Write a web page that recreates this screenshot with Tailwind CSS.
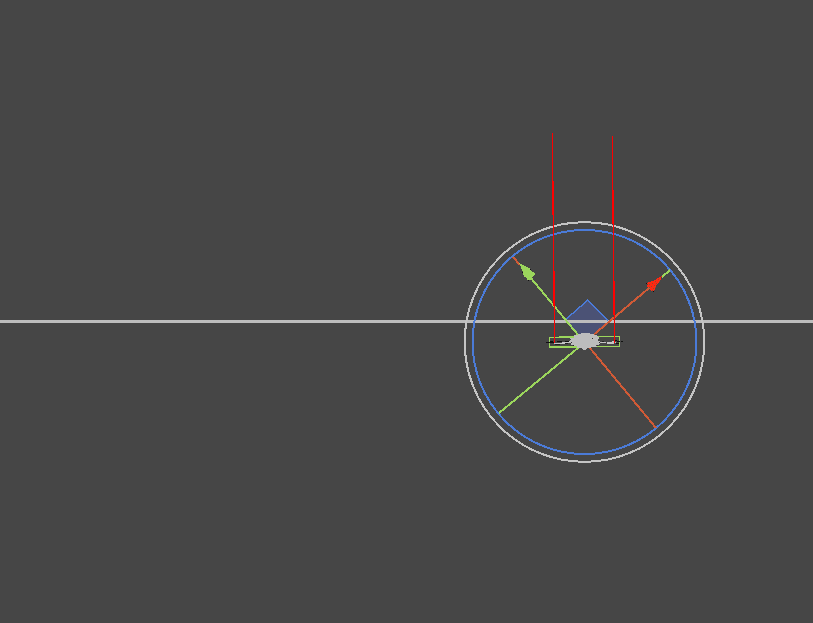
<!DOCTYPE html>
<html lang="en">
<head>
<meta charset="utf-8">
<meta name="viewport" content="width=device-width, initial-scale=1">
<title>Scene view</title>
<script src="https://cdn.jsdelivr.net/npm/@tailwindcss/browser@4"></script>
</head>
<body class="bg-[#464646]">
<main class="relative min-h-screen overflow-hidden bg-[#464646]">
<svg class="absolute inset-0 h-full w-full" shape-rendering="crispEdges" fill="none" role="img" aria-label="Scene with rotation gizmo">
  <!-- ground plane -->
  <rect x="0" y="320" width="100%" height="3" fill="#bdbdbd"/>
  <!-- plane handle -->
  <path d="M588 300L565 320L584 342L608 321Z" fill="#4b5275"/>
  <path d="M565 320.5H608M565 321.5H608M567 322.5H607" stroke="#bdbdbd"/>
  <path d="M565 320L588 300L608 321" stroke="#4b7bd8" stroke-width="1.4"/>
  <!-- collider bounds -->
  <path d="M549.5 337.5H559.5V336.5H619.5V346.5H549.5Z" stroke="#9bd65c"/>
  <path d="M559 337.5H580M549 347.5H577" stroke="#9bd65c"/>
  <!-- rotors -->
  <path d="M546 342.5H554M550 341.5H553M557 341.5H562M565 341.5H570M617 341.5H620M621 341.5H623M614 340.5H617M616 343.5H619" stroke="#111"/>
  <path d="M554 343.5H566M562 342.5H573M598 342.5H606M607 342.5H616M607 343.5H614M612 341.5H615" stroke="#c4c4c4"/>
  <path d="M555 344.5H560M573 345.5H577M602 341.5H604M565 343.5H568" stroke="#222"/>
  <!-- rotation rings -->
  <circle cx="584.5" cy="342" r="119.8" stroke="#c4c4c4" stroke-width="2"/>
  <circle cx="584.5" cy="342" r="112" stroke="#4b7bd8" stroke-width="2"/>
  <!-- axes -->
  <path d="M584 342L530 277M584 343L499 413M662 277L670 270" stroke="#9bd65c" stroke-width="2"/>
  <path d="M585 342L655 283M585 342L656 428M513 257L520 265" stroke="#d05a36" stroke-width="2"/>
  <path d="M519 263L531 269L532 272L535 273V275L533 276L532 279L528 281L526 277H524L523 272Z" fill="#9bd65c"/>
  <path d="M662 276L660 281L656 286L654 291L651 291L650 288L647 287L648 284L646 283L653 281Z" fill="#ff2811"/>
  <path d="M658 279h1v1h-1zM655 281h1v1h-1zM659 281h1v1h-1zM652 283h1v1h-1zM656 283h1v1h-1zM649 284h1v1h-1zM654 285h1v1h-1zM651 286h1v1h-1zM649 287h1v1h-1zM653 288h1v1h-1zM655 287h1v1h-1zM652 290h1v1h-1z" fill="#8f4a30"/>
  <path d="M646 283h1v1h-1zM653 291h1v1h-1zM522 272h1v1h-1zM530 269h1v1h-1zM528 280h1v1h-1z" fill="#111"/>
  <!-- rays -->
  <path d="M552.5 133V215M553.5 181V306M554.5 271V343M612.5 136V224M613.5 190V315M614.5 281V343" stroke="#f00"/>
  <!-- drone body -->
  <path d="M569 341L571 340L570 338L574 338L574 335L578 335V334H581V333H590V334H594V335H597L599 338L598 341L601 342L599 345H596L597 347L592 347L590 348H587L585 350H583L581 348H577V346H573L574 345H571V343H569Z" fill="#bdbdbd"/>
  <path d="M592 338h1v1h-1zM571 342h1v1h-1zM597 345h1v1h-1zM599 342h1v1h-1z" fill="#333"/>
</svg>
</main>
</body>
</html>
